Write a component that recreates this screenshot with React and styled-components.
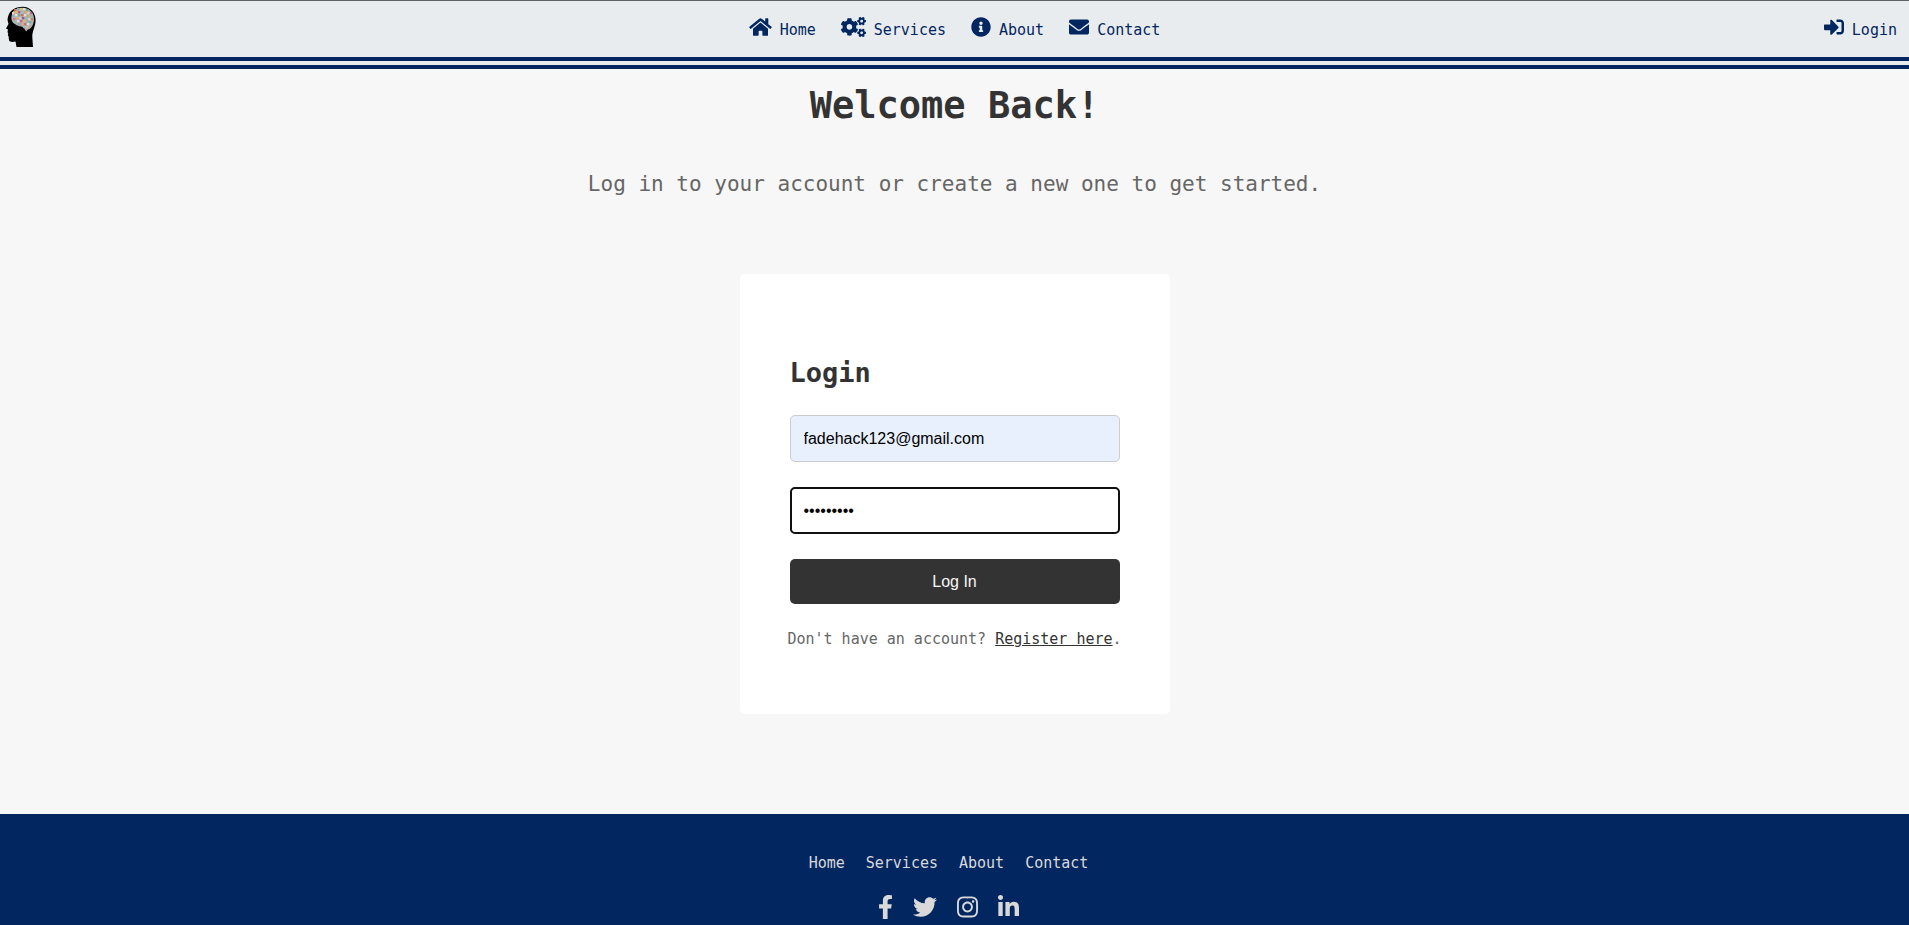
import React from "react";
import styled, { createGlobalStyle } from "styled-components";
import {
  FaHome, FaCogs, FaInfoCircle, FaEnvelope, FaSignInAlt,
  FaFacebookF, FaTwitter, FaInstagram, FaLinkedinIn,
} from "react-icons/fa";

const navy = "#022660";

const GlobalStyle = createGlobalStyle`
  * { box-sizing: border-box; }
  body {
    margin: 0;
    background: #f7f7f7;
    color: #333;
    font-family: "DejaVu Sans Mono", monospace;
    font-size: 15px;
    line-height: 18px;
  }
  html, body, #root { height: 100%; }
`;

const Page = styled.div`
  min-height: 100%;
  display: flex;
  flex-direction: column;
`;

const Header = styled.header`
  display: grid;
  grid-template-columns: 1fr auto 1fr;
  align-items: center;
  height: 69px;
  background: #e9ecef;
  border-top: 1px solid #5f6368;
  border-bottom: 12px double ${navy};
`;

const LogoLink = styled.a`
  display: flex;
  margin-bottom: 6px;
  padding-left: 3px;
`;

const Nav = styled.nav`
  display: flex;
  gap: 25px;
`;

const NavLink = styled.a`
  display: flex;
  align-items: flex-start;
  gap: 8px;
  margin-bottom: 2px;
  color: ${navy};
  text-decoration: none;

  svg { width: ${(p) => p.$iconWidth}px; height: 20px; }
  span { padding-top: 4px; }
`;

const LoginLink = styled(NavLink)`
  justify-self: end;
  padding-right: 12px;
`;

const Main = styled.main`
  flex: 1 0 auto;
  display: flex;
  flex-direction: column;
  align-items: center;
  padding: 13px 20px 100px;
`;

const Title = styled.h1`
  margin: 0;
  font-size: 37px;
  line-height: 48px;
`;

const Subtitle = styled.p`
  margin: 41px 0 0;
  color: #666;
  font-size: 21px;
  line-height: 26px;
`;

const Card = styled.form`
  display: flex;
  flex-direction: column;
  gap: 25px;
  width: 430px;
  max-width: 100%;
  margin-top: 77px;
  padding: 82px 50px 65px;
  background: #fff;
  border-radius: 5px;
`;

const CardTitle = styled.h2`
  margin: 0;
  font-size: 27px;
  line-height: 34px;
`;

const Field = styled.input`
  width: 100%;
  height: 47px;
  padding: 0 13px;
  border: 1px solid #ccc;
  border-radius: 5px;
  background: ${(p) => (p.$filled ? "#e8f0fe" : "#fff")};
  color: #000;
  font: 16px "Liberation Sans", sans-serif;
  outline: ${(p) => (p.$active ? "2px solid #101010" : "none")};
  outline-offset: -2px;
`;

const SubmitButton = styled.button`
  height: 45px;
  border: 0;
  border-radius: 5px;
  background: #333;
  color: #f7f7f7;
  font: 16px "Liberation Sans", sans-serif;
  cursor: pointer;
`;

const RegisterNote = styled.p`
  display: flex;
  justify-content: center;
  margin: 0;
  color: #666;
  line-height: 20px;
  white-space: pre;

  a { color: #333; }
`;

const Footer = styled.footer`
  display: flex;
  flex-direction: column;
  align-items: center;
  gap: 23px;
  padding: 40px 12px 6px 0;
  background: ${navy};
`;

const FooterRow = styled.div`
  display: flex;
  gap: ${(p) => p.$gap}px;
`;

const FooterLink = styled.a`
  color: #d9d9d9;
  text-decoration: none;
`;

const SocialLink = styled(FooterLink)`
  svg { display: block; width: ${(p) => p.$iconWidth}px; height: 24px; }
`;

const cells = [
  [14, 7, "#d96a4c"], [17, 6, "#7fb2c9"], [20, 6, "#e8c65a"], [23, 6, "#d8dfe2"], [26, 7, "#6fa58a"],
  [12, 10, "#e7d7c1"], [15, 9, "#d9c23d"], [18, 9, "#c94f88"], [21, 9, "#8fc4d8"], [24, 9, "#e3a04f"], [27, 10, "#c9d6dd"], [30, 10, "#cf5b7d"],
  [12, 13, "#8fb7d2"], [15, 12, "#ede3d0"], [18, 12, "#67a9a2"], [21, 12, "#d66a5c"], [24, 12, "#dddddd"], [27, 13, "#d9a83f"], [30, 13, "#8fb9c4"],
  [13, 16, "#d2738a"], [16, 15, "#dab36a"], [19, 15, "#bdd1dc"], [22, 15, "#a24d89"], [25, 15, "#7fc0cf"], [28, 16, "#e4d3c5"], [31, 16, "#c9805a"],
  [14, 19, "#8bc0cb"], [17, 18, "#dfe4e8"], [20, 18, "#d85592"], [23, 18, "#dbc455"], [26, 18, "#a1a9cf"], [29, 19, "#70b4a4"],
  [18, 21, "#7ea6bd"], [21, 21, "#e1ac6c"], [24, 21, "#cf6a84"], [27, 21, "#dce5e5"], [23, 24, "#9fbfc9"], [26, 24, "#d8b980"],
];

const BrainLogo = () => (
  <svg width="36" height="42" viewBox="3 5 36 42" role="img" aria-label="Brain logo">
    <path
      d="M21 7C28 6 35 11 35.500 19C36 26 32 31 32.300 37L33 47H16.500L15.500 41.500C13 42 9.500 42.500 9 40L8.600 36.500L7.800 35L8.300 33.500L7.500 32L8 29.500L6 28.500L8.500 24L7.500 20C8 12 13 7.500 21 7Z"
      fill="#000"
    />
    <path
      d="M22 7.800C28 7.500 34 12 34 19C34 25 31 29 28 29.500L26 31.500L24 28C22 25.500 18 27 15 24C11 22 11 18 12 14C13 10 17 8 22 7.800Z"
      fill="#b4b0ad"
    />
    {cells.map(([x, y, fill]) => (
      <rect key={`${x}-${y}`} x={x} y={y + 2} width="2.300" height="2.300" rx="0.500" fill={fill} />
    ))}
  </svg>
);

const navItems = [
  ["Home", FaHome, 23], ["Services", FaCogs, 25], ["About", FaInfoCircle, 20], ["Contact", FaEnvelope, 20],
];

const socials = [
  ["Facebook", FaFacebookF, 15], ["Twitter", FaTwitter, 24], ["Instagram", FaInstagram, 21], ["LinkedIn", FaLinkedinIn, 21],
];

export default function App() {
  return (
    <Page>
      <GlobalStyle />
      <Header>
        <LogoLink href="#home"><BrainLogo /></LogoLink>
        <Nav>
          {navItems.map(([name, Icon, width]) => (
            <NavLink key={name} href={`#${name.toLowerCase()}`} $iconWidth={width}>
              <Icon /><span>{name}</span>
            </NavLink>
          ))}
        </Nav>
        <LoginLink href="#login" $iconWidth={20}><FaSignInAlt /><span>Login</span></LoginLink>
      </Header>
      <Main>
        <Title>Welcome Back!</Title>
        <Subtitle>Log in to your account or create a new one to get started.</Subtitle>
        <Card onSubmit={(e) => e.preventDefault()}>
          <CardTitle>Login</CardTitle>
          <Field type="email" aria-label="Email" defaultValue="fadehack123@gmail.com" $filled />
          <Field type="password" aria-label="Password" defaultValue="password1" $active />
          <SubmitButton type="submit">Log In</SubmitButton>
          <RegisterNote>{"Don't have an account? "}<a href="#register">Register here</a>.</RegisterNote>
        </Card>
      </Main>
      <Footer>
        <FooterRow $gap={21}>
          {navItems.map(([name]) => (
            <FooterLink key={name} href={`#${name.toLowerCase()}`}>{name}</FooterLink>
          ))}
        </FooterRow>
        <FooterRow $gap={20}>
          {socials.map(([name, Icon, width]) => (
            <SocialLink key={name} href={`#${name.toLowerCase()}`} aria-label={name} $iconWidth={width}>
              <Icon />
            </SocialLink>
          ))}
        </FooterRow>
      </Footer>
    </Page>
  );
}
